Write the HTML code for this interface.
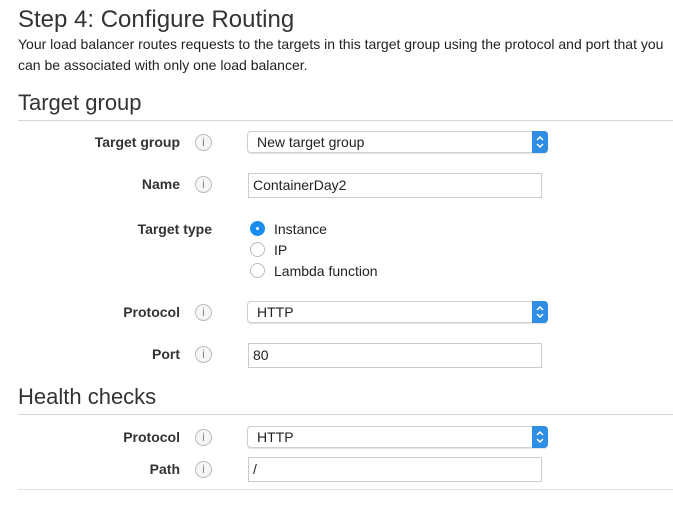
<!DOCTYPE html>
<html><head><style>
body{margin:0;width:673px;height:516px;background:#fff;font-family:"Liberation Sans",sans-serif;color:#222;position:relative;overflow:hidden}
.a{position:absolute;white-space:nowrap}
.lbl{position:absolute;right:493px;font-weight:bold;font-size:14px;color:#333}
.i{position:absolute;left:195px;width:15px;height:15px;border:1px solid #bbb;border-radius:50%;background:#f6f6f6;color:#888;font-size:12px;text-align:center;line-height:15px;font-family:"Liberation Sans",sans-serif}
.sel{position:absolute;left:247px;width:299px;height:20px;border:1px solid #d0d0d0;border-radius:4px;background:#fff;font-size:14px;line-height:20px;box-shadow:0 1px 1px rgba(0,0,0,.12)}
.sel span{margin-left:9px}
.sel b{position:absolute;right:-1px;top:-1px;width:16px;height:22px;background:#2f8de4;border-radius:0 4px 4px 0}
.inp{position:absolute;left:248px;width:292px;height:23px;border:1px solid #ccc;font-size:14px;line-height:23px}
.inp span{margin-left:4px}
.r{position:absolute;left:250px;width:13px;height:13px;border:1px solid #bbb;border-radius:50%;background:#fff}
.rl{position:absolute;left:274px;font-size:14px}
.hr{position:absolute;left:18px;right:0;height:1px;background:#d5d5d5}
</style></head><body>
<div class="a" style="left:18px;top:6px;font-size:24px;color:#333">Step 4: Configure Routing</div>
<div class="a" style="left:18px;top:36px;font-size:14px">Your load balancer routes requests to the targets in this target group using the protocol and port that you</div>
<div class="a" style="left:18px;top:57px;font-size:14px">can be associated with only one load balancer.</div>
<div class="a" style="left:18px;top:90px;font-size:22px;color:#333">Target group</div>
<div class="hr" style="top:120px"></div>

<div class="lbl" style="top:134px">Target group</div><div class="i" style="top:134px">i</div>
<div class="sel" style="top:131px"><span>New target group</span><b><svg width="16" height="22"><path d="M5 9l3-3 3 3M5 13l3 3 3-3" stroke="#fff" stroke-width="1.5" fill="none"/></svg></b></div>

<div class="lbl" style="top:176px">Name</div><div class="i" style="top:176px">i</div>
<div class="inp" style="top:173px"><span>ContainerDay2</span></div>

<div class="lbl" style="top:221px;right:461px">Target type</div>
<div class="r" style="top:221px;background:#1a8cf0;border-color:#1a8cf0"><div style="position:absolute;left:5px;top:5px;width:3px;height:3px;background:#fff;border-radius:50%"></div></div>
<div class="rl" style="top:221px">Instance</div>
<div class="r" style="top:242px"></div><div class="rl" style="top:242px">IP</div>
<div class="r" style="top:263px"></div><div class="rl" style="top:263px">Lambda function</div>

<div class="lbl" style="top:304px">Protocol</div><div class="i" style="top:304px">i</div>
<div class="sel" style="top:301px"><span>HTTP</span><b><svg width="16" height="22"><path d="M5 9l3-3 3 3M5 13l3 3 3-3" stroke="#fff" stroke-width="1.5" fill="none"/></svg></b></div>

<div class="lbl" style="top:346px">Port</div><div class="i" style="top:346px">i</div>
<div class="inp" style="top:343px"><span>80</span></div>

<div class="a" style="left:18px;top:384px;font-size:22px;color:#333">Health checks</div>
<div class="hr" style="top:414px"></div>

<div class="lbl" style="top:429px">Protocol</div><div class="i" style="top:429px">i</div>
<div class="sel" style="top:426px"><span>HTTP</span><b><svg width="16" height="22"><path d="M5 9l3-3 3 3M5 13l3 3 3-3" stroke="#fff" stroke-width="1.5" fill="none"/></svg></b></div>

<div class="lbl" style="top:461px">Path</div><div class="i" style="top:461px">i</div>
<div class="inp" style="top:457px"><span>/</span></div>
<div class="hr" style="top:489px;background:#e5e5e5"></div>
</body></html>
